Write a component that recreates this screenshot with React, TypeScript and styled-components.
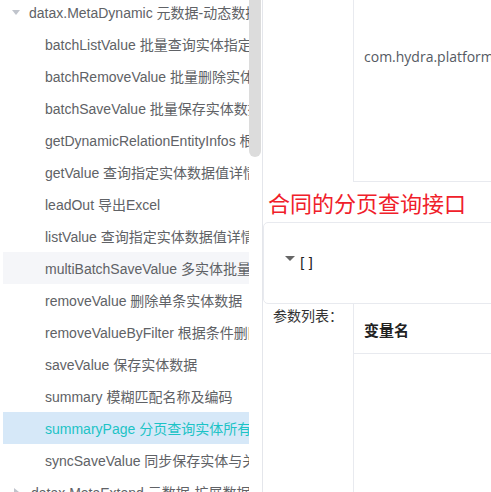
import React from "react";
import styled, { createGlobalStyle } from "styled-components";

const Global = createGlobalStyle`
  html, body { margin: 0; padding: 0; background: #fff; }
  body { width: 491px; height: 492px; overflow: hidden; }
`;

const Page = styled.div`
  display: flex;
  width: 491px;
  height: 492px;
  overflow: hidden;
  background: #fff;
`;

const Sidebar = styled.aside`
  position: relative;
  flex: 0 0 262px;
  height: 492px;
  border-right: 1px solid #e4e6eb;
  overflow: hidden;
`;

const TreeViewport = styled.div`
  width: 249px;
  height: 492px;
  overflow: hidden;
  padding-left: 3px;
  box-sizing: border-box;
`;

const TreeList = styled.div`
  display: flex;
  flex-direction: column;
  margin-top: -4px;
`;

const Row = styled.div<{ $level: number; $state?: "hover" | "active" }>`
  display: flex;
  align-items: center;
  height: 32px;
  flex: 0 0 32px;
  padding-left: ${(p) => (p.$level === 0 ? 9 : 42)}px;
  white-space: nowrap;
  font-family: "Liberation Sans", Arial, "Noto Sans CJK SC", sans-serif;
  font-size: 14px;
  color: ${(p) => (p.$state === "active" ? "#1cc3c6" : "#606266")};
  background: ${(p) =>
    p.$state === "active" ? "#d6e8f8" : p.$state === "hover" ? "#f5f6f9" : "transparent"};
`;

const Caret = styled.span<{ $open: boolean }>`
  display: inline-block;
  width: 0;
  height: 0;
  margin-right: 9px;
  margin-left: ${(p) => (p.$open ? 0 : 2)}px;
  ${(p) =>
    p.$open
      ? `border-left: 4px solid transparent; border-right: 4px solid transparent; border-top: 5px solid #c0c4cc; margin-top: 1px;`
      : `border-top: 4px solid transparent; border-bottom: 4px solid transparent; border-left: 5px solid #c0c4cc; margin-right: 12px;`}
`;

const ScrollThumb = styled.div`
  position: absolute;
  left: 249px;
  top: -10px;
  width: 12px;
  height: 167px;
  border-radius: 6px;
  background: #dcdcdc;
`;

const Main = styled.main`
  flex: 1 1 auto;
  min-width: 0;
  display: flex;
  flex-direction: column;
  overflow: hidden;
`;

const InfoRow = styled.div<{ $height?: number; $grow?: boolean }>`
  display: flex;
  flex: ${(p) => (p.$grow ? "1 1 auto" : "0 0 auto")};
  ${(p) => (p.$height ? `height: ${p.$height}px;` : "")}
`;

const LabelCell = styled.div`
  flex: 0 0 90px;
  box-sizing: border-box;
  padding: 1px 0 0 10px;
  font-family: "Noto Sans CJK SC", sans-serif;
  font-size: 14px;
  line-height: 20px;
  color: #333;
  white-space: nowrap;
`;

const ValueCell = styled.div<{ $bottom?: boolean }>`
  flex: 1 1 auto;
  border-left: 1px solid #e8eaef;
  ${(p) => (p.$bottom ? "border-bottom: 1px solid #e8eaef;" : "")}
  box-sizing: border-box;
  padding: 47px 0 0 10px;
  font-family: "Open Sans", "Noto Sans CJK SC", sans-serif;
  font-size: 14px;
  line-height: 20px;
  color: #555a63;
  white-space: nowrap;
  overflow: hidden;
`;

const Title = styled.h2`
  margin: 0;
  height: 40px;
  padding-left: 5px;
  display: flex;
  align-items: center;
  font-family: "Noto Sans CJK SC", sans-serif;
  font-weight: 400;
  font-size: 22px;
  color: #f0202a;
  white-space: nowrap;
`;

const JsonBox = styled.div`
  height: 82px;
  box-sizing: border-box;
  margin-right: -10px;
  border: 1px solid #e8eaef;
  border-radius: 5px;
  display: flex;
  align-items: center;
  padding: 0 0 0 21px;
`;

const JsonCaret = styled.span`
  display: inline-block;
  width: 0;
  height: 0;
  border-left: 5px solid transparent;
  border-right: 5px solid transparent;
  border-top: 5px solid #666;
  margin-top: -10px;
  margin-right: 3px;
`;

const JsonText = styled.span`
  font-family: "DejaVu Sans Mono", monospace;
  font-size: 14px;
  color: #222;
  letter-spacing: 0px;
`;

const ParamsCell = styled.div`
  flex: 1 1 auto;
  border-left: 1px solid #e8eaef;
  display: flex;
  flex-direction: column;
`;

const ParamsHeader = styled.div`
  height: 50px;
  box-sizing: border-box;
  border-bottom: 1px solid #e8eaef;
  padding: 16px 0 0 10px;
  font-family: "Noto Sans CJK SC", sans-serif;
  font-weight: 700;
  font-size: 15px;
  line-height: 20px;
  color: #222;
`;

type Item = { text: string; level: number; open?: boolean; state?: "hover" | "active" };

const items: Item[] = [
  { text: "datax.MetaDynamic 元数据-动态数据", level: 0, open: true },
  { text: "batchListValue 批量查询实体指定数据", level: 1 },
  { text: "batchRemoveValue 批量删除实体数据", level: 1 },
  { text: "batchSaveValue 批量保存实体数据", level: 1 },
  { text: "getDynamicRelationEntityInfos 根据", level: 1 },
  { text: "getValue 查询指定实体数据值详情", level: 1 },
  { text: "leadOut 导出Excel", level: 1 },
  { text: "listValue 查询指定实体数据值详情", level: 1 },
  { text: "multiBatchSaveValue 多实体批量保存", level: 1, state: "hover" },
  { text: "removeValue 删除单条实体数据", level: 1 },
  { text: "removeValueByFilter 根据条件删除", level: 1 },
  { text: "saveValue 保存实体数据", level: 1 },
  { text: "summary 模糊匹配名称及编码", level: 1 },
  { text: "summaryPage 分页查询实体所有数据", level: 1, state: "active" },
  { text: "syncSaveValue 同步保存实体与关联", level: 1 },
  { text: "datax.MetaExtend 元数据-扩展数据", level: 0, open: false },
];

export default function App() {
  return (
    <>
      <Global />
      <Page>
        <Sidebar>
          <TreeViewport>
            <TreeList>
              {items.map((it, i) => (
                <Row key={i} $level={it.level} $state={it.state}>
                  {it.level === 0 && <Caret $open={!!it.open} />}
                  {it.text}
                </Row>
              ))}
            </TreeList>
          </TreeViewport>
          <ScrollThumb />
        </Sidebar>
        <Main>
          <InfoRow $height={182}>
            <LabelCell />
            <ValueCell $bottom>com.hydra.platform.datax.contract</ValueCell>
          </InfoRow>
          <Title>合同的分页查询接口</Title>
          <JsonBox>
            <JsonCaret />
            <JsonText>[]</JsonText>
          </JsonBox>
          <InfoRow $grow>
            <LabelCell>参数列表：</LabelCell>
            <ParamsCell>
              <ParamsHeader>变量名</ParamsHeader>
            </ParamsCell>
          </InfoRow>
        </Main>
      </Page>
    </>
  );
}
